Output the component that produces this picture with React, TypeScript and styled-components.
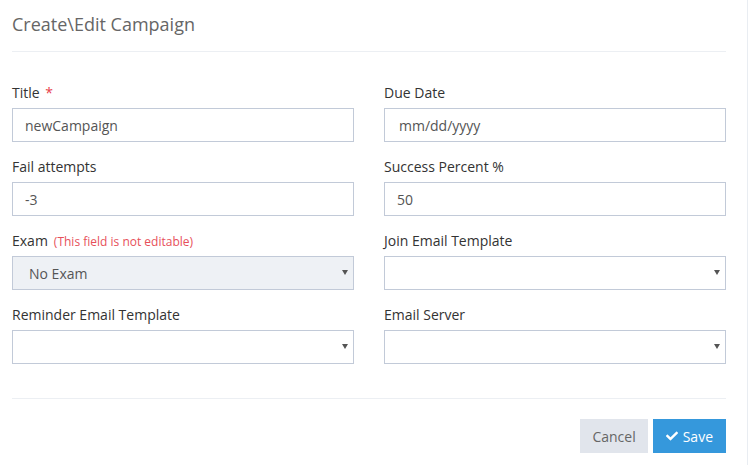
import React from 'react'
import styled, { createGlobalStyle } from 'styled-components'

const GlobalStyle = createGlobalStyle`
  html, body {
    margin: 0;
    padding: 0;
    background: #fff;
    font-family: 'Open Sans', 'Liberation Sans', sans-serif;
  }
  * {
    box-sizing: border-box;
  }
`

const Modal = styled.div`
  width: 748px;
  min-height: 465px;
  background: #fff;
  border-right: 1px solid #e9edf2;
  padding: 0 21px 0 12px;
`

const Header = styled.div`
  padding: 12px 0 15px;
  border-bottom: 1px solid #eceff3;
`

const Heading = styled.h4`
  margin: 0;
  font-size: 18px;
  line-height: 24px;
  font-weight: 400;
  color: #666;
`

const Body = styled.form`
  padding: 31px 0 19px;
  display: grid;
  grid-template-columns: 342px 342px;
  column-gap: 30px;
`

const Group = styled.div`
  margin-bottom: 15px;
`

const Label = styled.label`
  display: flex;
  align-items: baseline;
  gap: 6px;
  height: 20px;
  font-size: 14px;
  line-height: 20px;
  color: #333;
  margin-bottom: 5px;
`

const Required = styled.span`
  color: #e73d4a;
  margin-left: 2px;
`

const Note = styled.span`
  color: #e7505a;
  font-size: 12px;
`

const Input = styled.input<{ $pad?: number }>`
  display: block;
  width: 100%;
  height: 34px;
  padding: 6px ${p => p.$pad ?? 12}px;
  font: inherit;
  font-size: 14px;
  color: #555;
  border: 1px solid #c2cad8;
  border-radius: 0;
  outline: none;
  background: #fff;

  &::placeholder {
    color: #555;
  }
`

const SelectWrap = styled.div`
  position: relative;

  &::after {
    content: '';
    position: absolute;
    right: 6px;
    top: 14px;
    border-left: 3px solid transparent;
    border-right: 3px solid transparent;
    border-top: 5px solid #555;
    pointer-events: none;
  }
`

const Select = styled.select`
  display: block;
  width: 100%;
  height: 34px;
  padding: 6px 16px;
  font: inherit;
  font-size: 14px;
  color: #555;
  border: 1px solid #c2cad8;
  border-radius: 0;
  outline: none;
  background: #fff;
  appearance: none;

  &:disabled {
    background: #eef1f5;
    opacity: 1;
    color: #555;
  }
`

const Footer = styled.div`
  border-top: 1px solid #eceff3;
  padding: 20px 0 12px;
  display: flex;
  justify-content: flex-end;
  gap: 5px;
`

const Button = styled.button<{ $primary?: boolean }>`
  height: 34px;
  padding: 0 ${p => (p.$primary ? 13 : 12)}px;
  display: flex;
  align-items: center;
  gap: 5px;
  border: none;
  border-radius: 0;
  font: inherit;
  font-size: 14px;
  color: ${p => (p.$primary ? '#fff' : '#666')};
  background: ${p => (p.$primary ? '#3598dc' : '#e1e5ec')};
`

const CheckIcon = () => (
  <svg width='12' height='12' viewBox='0 0 512 512' fill='#fff'>
    <path d='M173.9 439.4L7.5 273c-10-10-10-26.2 0-36.2l36.2-36.2c10-10 26.2-10 36.2 0L192 312.7 432.1 72.6c10-10 26.2-10 36.2 0l36.2 36.2c10 10 10 26.2 0 36.2L210.1 439.4c-10 10-26.2 10-36.2 0z' />
  </svg>
)

const App = () => {
  return (
    <>
      <GlobalStyle />
      <Modal>
        <Header>
          <Heading>Create\Edit Campaign</Heading>
        </Header>

        <Body onSubmit={e => e.preventDefault()}>
          <Group>
            <Label>
              <span>
                Title <Required>*</Required>
              </span>
            </Label>
            <Input defaultValue='newCampaign' />
          </Group>

          <Group>
            <Label>Due Date</Label>
            <Input $pad={14} placeholder='mm/dd/yyyy' />
          </Group>

          <Group>
            <Label>Fail attempts</Label>
            <Input defaultValue='-3' />
          </Group>

          <Group>
            <Label>Success Percent %</Label>
            <Input defaultValue='50' />
          </Group>

          <Group>
            <Label>
              Exam <Note>(This field is not editable)</Note>
            </Label>
            <SelectWrap>
              <Select disabled defaultValue='none'>
                <option value='none'>No Exam</option>
              </Select>
            </SelectWrap>
          </Group>

          <Group>
            <Label>Join Email Template</Label>
            <SelectWrap>
              <Select defaultValue=''>
                <option value='' />
              </Select>
            </SelectWrap>
          </Group>

          <Group>
            <Label>Reminder Email Template</Label>
            <SelectWrap>
              <Select defaultValue=''>
                <option value='' />
              </Select>
            </SelectWrap>
          </Group>

          <Group>
            <Label>Email Server</Label>
            <SelectWrap>
              <Select defaultValue=''>
                <option value='' />
              </Select>
            </SelectWrap>
          </Group>
        </Body>

        <Footer>
          <Button type='button'>Cancel</Button>
          <Button type='button' $primary>
            <CheckIcon />
            Save
          </Button>
        </Footer>
      </Modal>
    </>
  )
}

export default App
